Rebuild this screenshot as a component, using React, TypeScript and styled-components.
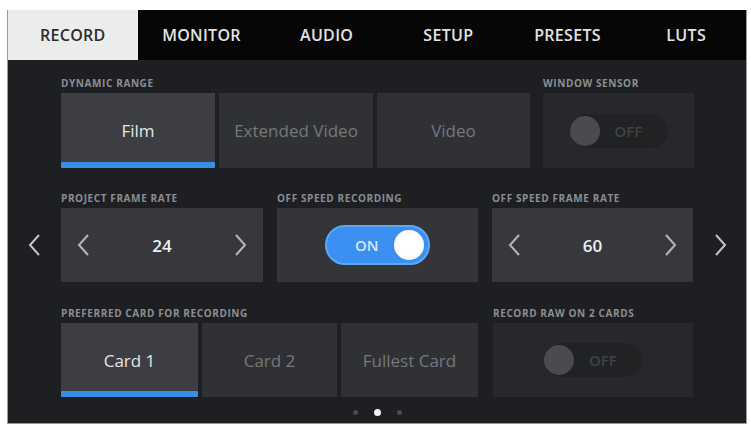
import styled, { createGlobalStyle } from "styled-components";

const GlobalStyle = createGlobalStyle`
  body {
    margin: 0;
    background: #ffffff;
    font-family: "Open Sans", "Liberation Sans", sans-serif;
  }
`;

const Screen = styled.div`
  margin: 10px 0 0 7px;
  width: 740px;
  height: 414px;
  background: #1d1f22;
  border: 1px solid #9a9a9a;
  border-top: none;
  box-sizing: border-box;
  display: flex;
  flex-direction: column;
  overflow: hidden;
`;

const TabBar = styled.div`
  height: 50px;
  display: flex;
  background: #060606;
  flex-shrink: 0;
`;

const Tab = styled.div<{ $w: number; $active?: boolean }>`
  width: ${(p) => p.$w}px;
  display: flex;
  align-items: center;
  justify-content: center;
  font-size: 16px;
  font-weight: 600;
  letter-spacing: 0.3px;
  color: ${(p) => (p.$active ? "#2a2b2d" : "#e4e4e4")};
  background: ${(p) => (p.$active ? "#ececec" : "transparent")};
`;

const Body = styled.div`
  display: grid;
  grid-template-columns: 53px 633px 1fr;
  padding-top: 16px;
`;

const Row = styled.div<{ $gap: number; $top?: number }>`
  grid-column: 2;
  display: flex;
  gap: ${(p) => p.$gap}px;
  margin-top: ${(p) => p.$top ?? 0}px;
`;

const Field = styled.div<{ $w: number }>`
  width: ${(p) => p.$w}px;
  display: flex;
  flex-direction: column;
`;

const Label = styled.div`
  height: 14px;
  line-height: 14px;
  margin-bottom: 3px;
  font-size: 10px;
  font-weight: 700;
  letter-spacing: 0.6px;
  color: #8c8e92;
  white-space: nowrap;
`;

const Segments = styled.div`
  display: flex;
  gap: 4px;
`;

const Segment = styled.div<{ $w: number; $h: number; $active?: boolean }>`
  position: relative;
  width: ${(p) => p.$w}px;
  height: ${(p) => p.$h}px;
  display: flex;
  align-items: center;
  justify-content: center;
  font-size: 17px;
  font-weight: 500;
  color: ${(p) => (p.$active ? "#e6e6e6" : "#76787c")};
  background: ${(p) => (p.$active ? "#3c3e43" : "#2f3135")};

  &::after {
    content: "";
    display: ${(p) => (p.$active ? "block" : "none")};
    position: absolute;
    left: 0;
    right: 0;
    bottom: 0;
    height: 6px;
    border-radius: 1px;
    background: #3b8de2;
  }
`;

const Panel = styled.div<{ $h: number; $bg: string }>`
  height: ${(p) => p.$h}px;
  background: ${(p) => p.$bg};
  display: flex;
  align-items: center;
  justify-content: center;
`;

const Stepper = styled(Panel)`
  justify-content: space-between;
  padding: 0 16px;
`;

const Value = styled.span`
  font-size: 17px;
  font-weight: 600;
  color: #f0f0f0;
`;

const OnPill = styled.div`
  width: 105px;
  height: 40px;
  box-sizing: border-box;
  border-radius: 20px;
  background: #3a8ff0;
  border: 2px solid #5aa8f6;
  display: flex;
  align-items: center;
  justify-content: space-between;
  padding: 0 4px 0 28px;
  font-size: 15px;
  font-weight: 600;
  color: #d6eaff;
`;

const OffPill = styled.div`
  width: 98px;
  height: 34px;
  border-radius: 17px;
  background: #202224;
  display: flex;
  align-items: center;
  gap: 15px;
  font-size: 15px;
  font-weight: 600;
  color: #414245;
`;

const Knob = styled.div<{ $on?: boolean }>`
  width: 30px;
  height: 30px;
  border-radius: 50%;
  background: ${(p) => (p.$on ? "#ffffff" : "#4a4b4e")};
  box-shadow: ${(p) => (p.$on ? "0 0 4px #f6e8d8 inset" : "none")};
`;

const SideArrow = styled.div<{ $col: number }>`
  grid-column: ${(p) => p.$col};
  grid-row: 2;
  align-self: end;
  height: 74px;
  display: flex;
  align-items: center;
  justify-content: center;
`;

const Dots = styled.div`
  grid-column: 2;
  display: flex;
  justify-content: center;
  align-items: center;
  gap: 16px;
  margin-top: 12px;
  height: 6px;
`;

const Dot = styled.div<{ $active?: boolean }>`
  width: ${(p) => (p.$active ? 7 : 5)}px;
  height: ${(p) => (p.$active ? 7 : 5)}px;
  border-radius: 50%;
  background: ${(p) => (p.$active ? "#f2f2f2" : "#4a4c50")};
`;

function Chevron({ dir, color = "#b4b6b9" }: { dir: "left" | "right"; color?: string }) {
  const pts = dir === "left" ? "11,1 2,11 11,21" : "2,1 11,11 2,21";
  return (
    <svg width="13" height="22" viewBox="0 0 13 22">
      <polyline points={pts} fill="none" stroke={color} strokeWidth="2" strokeLinejoin="miter" />
    </svg>
  );
}

const tabs: [string, number][] = [
  ["RECORD", 130],
  ["MONITOR", 128],
  ["AUDIO", 123],
  ["SETUP", 121],
  ["PRESETS", 118],
  ["LUTS", 120],
];

export default function App() {
  return (
    <>
      <GlobalStyle />
      <Screen>
        <TabBar>
          {tabs.map(([name, w], i) => (
            <Tab key={name} $w={w} $active={i === 0}>
              {name}
            </Tab>
          ))}
        </TabBar>
        <Body>
          <Row $gap={13}>
            <Field $w={469}>
              <Label>DYNAMIC RANGE</Label>
              <Segments>
                <Segment $w={154} $h={75} $active>Film</Segment>
                <Segment $w={154} $h={75}>Extended Video</Segment>
                <Segment $w={153} $h={75}>Video</Segment>
              </Segments>
            </Field>
            <Field $w={152}>
              <Label>WINDOW SENSOR</Label>
              <Panel $h={75} $bg="#26282b">
                <OffPill>
                  <Knob />
                  OFF
                </OffPill>
              </Panel>
            </Field>
          </Row>

          <SideArrow $col={1}>
            <Chevron dir="left" color="#c2c4c6" />
          </SideArrow>
          <Row $gap={14} $top={23}>
            <Field $w={202}>
              <Label>PROJECT FRAME RATE</Label>
              <Stepper $h={74} $bg="#36383c">
                <Chevron dir="left" />
                <Value>24</Value>
                <Chevron dir="right" />
              </Stepper>
            </Field>
            <Field $w={201}>
              <Label>OFF SPEED RECORDING</Label>
              <Panel $h={74} $bg="#333539">
                <OnPill>
                  ON
                  <Knob $on />
                </OnPill>
              </Panel>
            </Field>
            <Field $w={201}>
              <Label>OFF SPEED FRAME RATE</Label>
              <Stepper $h={74} $bg="#36383c">
                <Chevron dir="left" />
                <Value>60</Value>
                <Chevron dir="right" />
              </Stepper>
            </Field>
          </Row>
          <SideArrow $col={3}>
            <Chevron dir="right" color="#c2c4c6" />
          </SideArrow>

          <Row $gap={15} $top={24}>
            <Field $w={417}>
              <Label>PREFERRED CARD FOR RECORDING</Label>
              <Segments>
                <Segment $w={137} $h={74} $active>Card 1</Segment>
                <Segment $w={135} $h={74}>Card 2</Segment>
                <Segment $w={137} $h={74}>Fullest Card</Segment>
              </Segments>
            </Field>
            <Field $w={200}>
              <Label>RECORD RAW ON 2 CARDS</Label>
              <Panel $h={74} $bg="#26282b">
                <OffPill>
                  <Knob />
                  OFF
                </OffPill>
              </Panel>
            </Field>
          </Row>

          <Dots>
            <Dot />
            <Dot $active />
            <Dot />
          </Dots>
        </Body>
      </Screen>
    </>
  );
}
